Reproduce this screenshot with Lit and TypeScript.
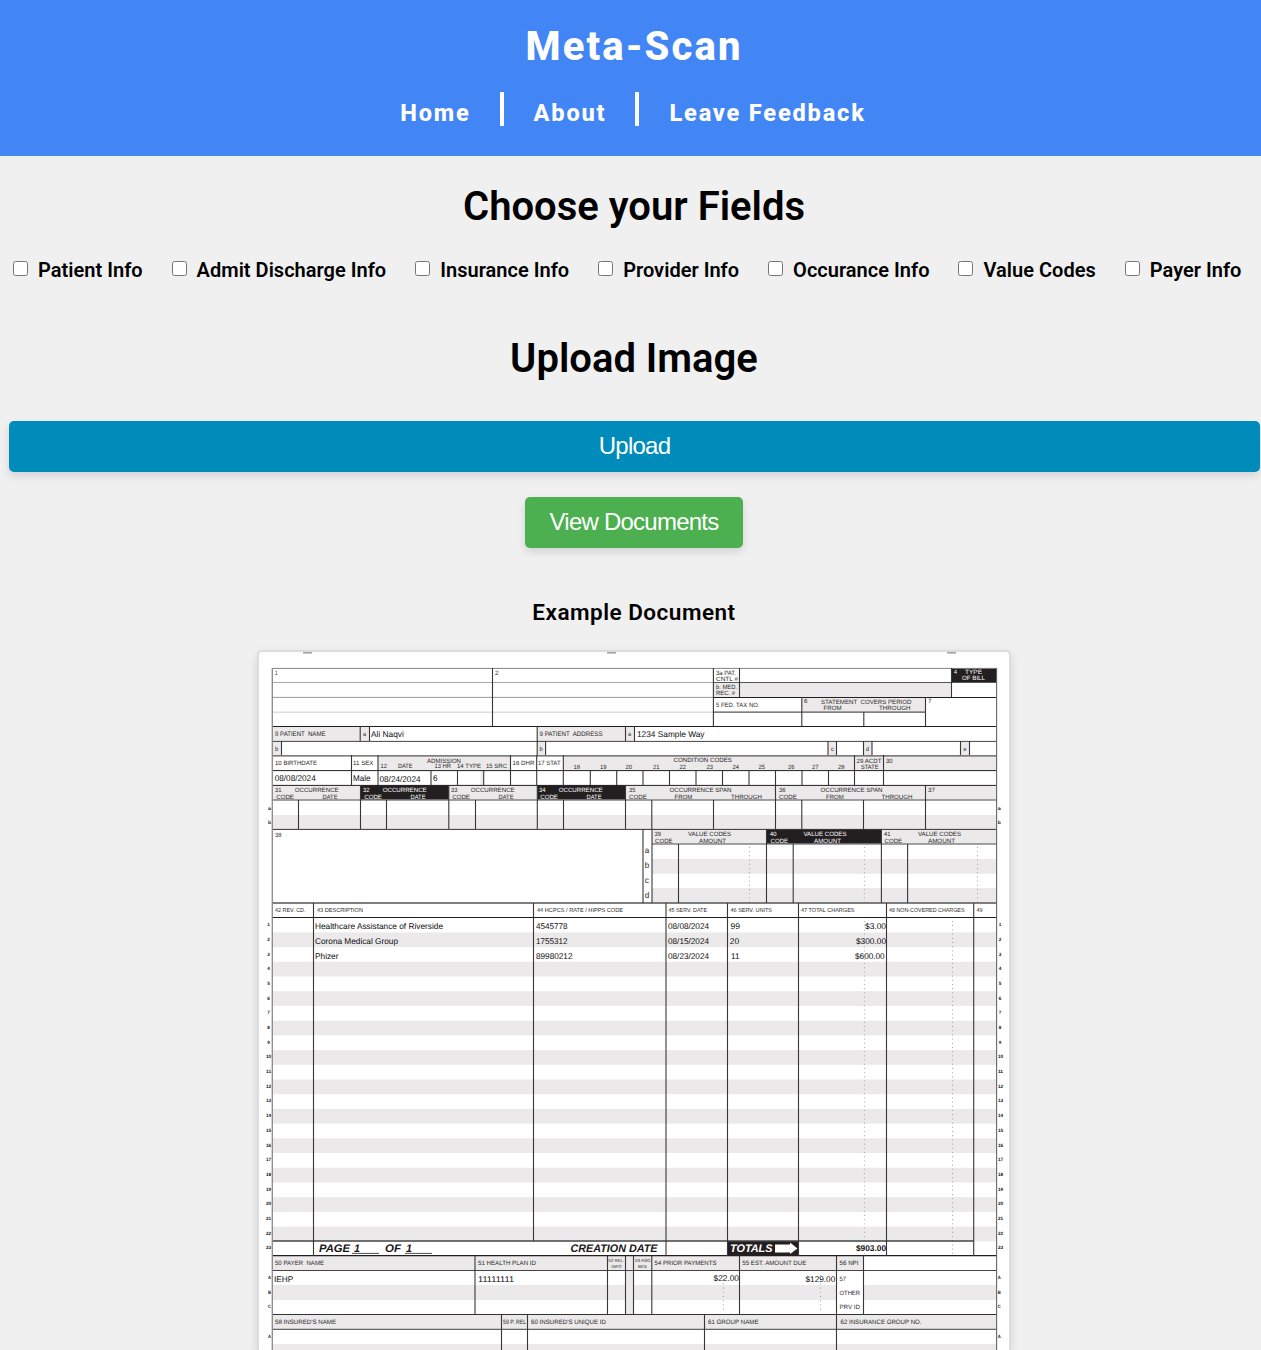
import { LitElement, html, svg, css } from "lit";
import { customElement } from "lit/decorators.js";

const INK = "#231f20";
const SHADE = "#ebe9ea";
const MID = "#858384";

// [x, y, width, height, fill]
type Box = [number, number, number, number, string];
// [x1, y1, x2, y2, stroke, width]
type Rule = [number, number, number, number, string?, number?];
// [text, x, baseline, width, size, variant]
type Label = [string, number, number, number, number?, string?];

const boxes: Box[] = [
  [303, 652, 9, 1.6, "#a5a5a5"], [607, 652, 9, 1.6, "#a5a5a5"], [947, 652, 9, 1.6, "#a5a5a5"],
  [951.5, 668, 45.5, 14.5, INK], [713.5, 682.5, 238, 14.8, SHADE],
  [802, 697.3, 123.5, 14.7, SHADE],
  [272, 726.3, 97.5, 15, SHADE], [537, 726.3, 97.5, 15, SHADE],
  [272, 741.3, 9.5, 14.3, SHADE], [537, 741.3, 8.5, 14.3, SHADE],
  [828, 741.3, 8.5, 14.3, SHADE], [863.5, 741.3, 8.5, 14.3, SHADE], [960.5, 741.3, 9, 14.3, SHADE],
  [378, 755.6, 132.5, 14.9, SHADE], [563.3, 755.6, 433.7, 14.9, SHADE],
  [480.5, 770.5, 3, 14.8, SHADE],
  [272, 785.3, 725, 14.7, SHADE], [360.5, 785.3, 88.3, 14.7, INK], [537.3, 785.3, 88.2, 14.7, INK],
  [272, 815, 725, 14.3, SHADE],
  [652, 829.3, 345, 14.7, SHADE], [766.5, 829.3, 115, 14.7, INK],
  [652, 859, 345, 14.8, SHADE], [652, 888, 345, 15, SHADE],
  ...Array.from({ length: 11 }, (_, i): Box => [272, 932.4 + i * 29.42, i === 10 ? 701.5 : 725, 14.7, SHADE]),
  [973.5, 1226.6, 23.5, 14.7, SHADE],
  [727.5, 1241, 71, 14.7, INK],
  [272, 1255.7, 591.5, 14.8, SHADE], [272, 1285, 564.5, 15, SHADE],
  [625.5, 1255.7, 8, 58.8, SHADE], [863.5, 1285, 133.5, 15, SHADE],
  [272, 1314.5, 725, 14.8, SHADE], [272, 1344, 725, 6, SHADE],
];

const across = (y: number, c = INK, w = 1, x1 = 272, x2 = 997): Rule => [x1, y, x2, y, c, w];
const down = (y1: number, y2: number, ...xs: number[]): Rule[] => xs.map((x) => [x, y1, x, y2]);

const rules: Rule[] = [
  across(668.4, MID), across(682.5, "#aaa", 1, 272, 713), across(697.4, "#999", 1, 272, 713),
  across(712.2, "#ccc", 1, 272, 713), across(682.5, "#555", 1, 713, 997), across(697.5, INK, 1, 713, 997),
  across(712.2, "#555", 1.2, 713, 925.5), across(726.5), across(741.4, "#444"), across(755.8, "#555", 1.3),
  across(770.6), across(785.4), across(800, MID, 1.6), across(829.4, "#333"),
  across(844, MID, 1.4, 652), across(903, "#555", 1.3), across(917.5), across(1241, "#444", 1.3, 272, 973.5),
  across(1255.6, INK, 1.2), across(1270.5, "#444"), across(1314.5, "#333"), across(1329.3, "#666", 1.2),
  [272.3, 668, 272.3, 1350, "#888", 1.3], [996.6, 668, 996.6, 1350, "#666", 1.1],
  ...down(668, 726, 492.5, 713.4), ...down(668, 697, 739.5, 951.5),
  ...down(697, 726, 801.8, 925.5), ...down(712, 726, 863.8),
  ...down(726, 741, 360.2, 369.5, 625.5, 634.5), ...down(726, 755, 537.2),
  ...down(741, 755, 281.5, 545.6, 828, 836.5, 863.5, 872, 960.5, 969.5),
  ...down(755, 785, 351.5, 378, 510.5, 536.7, 563.3, 854.5, 883.5),
  ...down(770.5, 785, 431, 457.5, 483.7, 590.3, 616.7, 643, 669.5, 696, 722.5, 749, 775.5, 802, 828.5),
  ...down(785, 829, 360.5, 448.8, 537.3, 625.5, 775.5, 925.5),
  ...down(800, 829, 298.5, 386.5, 475.5, 563.5, 651.8, 713.5, 801.8, 863.5),
  ...down(829, 903, 643, 652, 766.5, 881.4), ...down(844, 903, 678.5, 793.2, 907.6),
  ...down(903, 1256, 313.5, 666, 727.5, 798.5, 886.5, 973.7), ...down(903, 1241, 533.5),
  ...down(1256, 1314, 475, 607.5, 625.5, 633.5, 651.8, 739.5, 836.5, 863.5),
  ...down(1314, 1350, 501.5, 527.5, 704.5, 836.5),
  across(1253.4, INK, 0.8, 352, 379), across(1253.4, INK, 0.8, 405, 432),
];

// [x, y1, y2]
const dotted: [number, number, number][] = [
  [749.5, 847, 902], [864.4, 847, 902], [977.5, 847, 902],
  [864.4, 921, 1254], [952.5, 921, 1254], [723.4, 1275, 1312], [820.5, 1275, 1312],
];

const labels: Label[] = [
  ["1", 275, 675.3, 2.5], ["2", 495, 675.3, 3.5],
  ["3a PAT.", 716, 674.8, 20], ["CNTL #", 716, 681, 22], ["b. MED.", 716, 689.2, 21], ["REC. #", 716, 695.2, 19],
  ["4", 954, 674, 3, 6.2, "inv"], ["TYPE", 965, 674, 17, 6.2, "inv"], ["OF BILL", 962, 680, 23, 6.2, "inv"],
  ["5 FED. TAX NO.", 716, 706.7, 43.5], ["6", 804, 703.3, 3.5], ["STATEMENT  COVERS PERIOD", 821, 703.6, 90.5],
  ["FROM", 823.5, 710.2, 18], ["THROUGH", 879, 710.2, 31.5], ["7", 928, 703.3, 3.5],
  ["8 PATIENT  NAME", 275, 736, 50.5, 6.5], ["a", 363, 736, 3], ["9 PATIENT  ADDRESS", 539.5, 736, 63, 6.5], ["a", 628, 736, 3],
  ["b", 275, 751, 3.2], ["b", 539.5, 751, 3.2], ["c", 831, 751, 3], ["d", 866, 751, 3], ["e", 963.5, 751, 3],
  ["10 BIRTHDATE", 275, 765.3, 42], ["11 SEX", 353, 765.3, 20.5], ["12", 380.5, 768.4, 6.5], ["DATE", 398, 768.4, 14.5],
  ["ADMISSION", 427, 762.5, 34], ["13 HR", 434.5, 768.4, 16.5], ["14 TYPE", 457, 768.4, 24], ["15 SRC", 486, 768.4, 21],
  ["16 DHR", 512.5, 765.3, 22], ["17 STAT", 538, 765.3, 22.5], ["CONDITION CODES", 673.5, 762.4, 58.5],
  ...["18", "19", "20", "21", "22", "23", "24", "25", "26", "27", "28"].map(
    (n, i): Label => [n, [573.5, 600, 625.5, 653, 679.5, 706.5, 732.5, 758.5, 788, 812, 838][i], 768.6, 6.5]),
  ["29 ACDT", 856.5, 762.7, 25], ["STATE", 861, 768.8, 17.5], ["30", 886, 762.5, 6.5],
  ...[[275, ""], [363, "inv"], [451, ""], [539, "inv"]].flatMap(([x, v], i): Label[] => [
    [String(31 + i), +x, 791.7, 6.5, 6.2, String(v)], ["OCCURRENCE", +x + 19.7, 791.7, 44, 6.2, String(v)],
    ["CODE", +x + 1.2, 798.6, 17.8, 6.2, String(v)], ["DATE", +x + 47.5, 798.6, 15, 6.2, String(v)]]),
  ...[[629, 669.5, 674.5, 731], [779, 820.5, 826, 881.5]].flatMap(([x, a, b, c], i): Label[] => [
    [String(35 + i), x, 791.7, 6.5], ["OCCURRENCE SPAN", a, 791.7, 62], ["CODE", x, 798.6, 17.8],
    ["FROM", b, 798.6, 17.8], ["THROUGH", c, 798.6, 31]]),
  ["37", 928, 791.7, 7], ["38", 275, 836.5, 6.5],
  ...[[654.5, 688, 699, ""], [770, 803.5, 814, "inv"], [884, 918, 928, ""]].flatMap(([x, a, b, v], i): Label[] => [
    [String(39 + i), +x, 836.4, 6.5, 6.2, String(v)], ["VALUE CODES", +a, 836.4, 43, 6.2, String(v)],
    ["CODE", +x + 0.6, 842.9, 17.5, 6.2, String(v)], ["AMOUNT", +b, 842.9, 27, 6.2, String(v)]]),
  ["a", 644.8, 853, 4.5, 8.4], ["b", 644.8, 868, 4.5, 8.4], ["c", 644.8, 883, 4.2, 8.4], ["d", 644.8, 898.4, 4.5, 8.4],
  ["42 REV. CD.", 275, 912.3, 30.5, 5.8], ["43 DESCRIPTION", 317, 912.3, 46, 5.8], ["44 HCPCS / RATE / HIPPS CODE", 537, 912.3, 86, 5.8],
  ["45 SERV. DATE", 668.5, 912.3, 38.5, 5.8], ["46 SERV. UNITS", 730.5, 912.3, 41.5, 5.8], ["47 TOTAL CHARGES", 801, 912.3, 53.5, 5.8],
  ["48 NON-COVERED CHARGES", 889, 912.3, 75.5, 5.8], ["49", 976.5, 912.3, 6, 5.8],
  ["50 PAYER  NAME", 275, 1265.2, 49, 6.3], ["51 HEALTH PLAN ID", 478, 1265.2, 58, 6.3],
  ["52 REL.", 608.3, 1261.5, 16, 4.5], ["INFO", 611.5, 1268, 10, 4.5], ["53 ASG", 635, 1261.5, 15.5, 4.5], ["BEN.", 638, 1268, 9.5, 4.5],
  ["54 PRIOR PAYMENTS", 654.5, 1265.2, 62, 6.3], ["55 EST. AMOUNT DUE", 742.3, 1265.2, 64, 6.3], ["56 NPI", 839.5, 1265.2, 19, 6.3],
  ["57", 839.5, 1280.6, 6.5], ["OTHER", 839.5, 1294.6, 20.5, 6.2], ["PRV ID", 839.5, 1308.6, 20.5, 6.2],
  ["58 INSURED'S NAME", 275, 1324, 61, 6.3], ["59 P. REL", 503, 1324, 23.3, 6.3], ["60 INSURED'S UNIQUE ID", 531, 1324, 75, 6.3],
  ["61 GROUP NAME", 708, 1324, 50.5, 6.3], ["62 INSURANCE GROUP NO.", 840.5, 1324, 81, 6.3],
  // Filled-in values
  ["Ali Naqvi", 371, 737, 32.8, 8.3, "val"], ["1234 Sample Way", 637, 737, 67.5, 8.3, "val"],
  ["08/08/2024", 274.7, 781.3, 41, 8.3, "val"], ["Male", 353, 780.8, 17.5, 8.3, "val"], ["08/24/2024", 379.5, 782.3, 41, 8.3, "val"], ["6", 433, 781.3, 4.5, 8.3, "val"],
  ["Healthcare Assistance of Riverside", 315, 928.6, 128, 8.3, "val"], ["Corona Medical Group", 315, 944, 83, 8.3, "val"], ["Phizer", 315, 958.6, 23.5, 8.3, "val"],
  ["4545778", 536, 929.2, 31.5, 8.3, "val"], ["1755312", 536, 944, 31.5, 8.3, "val"], ["89980212", 536, 958.6, 36.5, 8.3, "val"],
  ["08/08/2024", 668, 929.4, 41, 8.3, "val"], ["08/15/2024", 668, 944, 41, 8.3, "val"], ["08/23/2024", 668, 958.8, 41, 8.3, "val"],
  ["99", 730.5, 929.3, 9.5, 8.3, "val"], ["20", 729.8, 944, 9.3, 8.3, "val"], ["11", 731, 959.4, 8.5, 8.3, "val"],
  ["$3.00", 865, 929.4, 21, 8.3, "val"], ["$300.00", 856, 944, 30, 8.3, "val"], ["$600.00", 855, 958.8, 29.7, 8.3, "val"],
  ["IEHP", 274, 1281.8, 19.3, 8.3, "val"], ["11111111", 478, 1281.9, 36, 8.3, "val"],
  ["$22.00", 713.5, 1281.4, 25.5, 8.3, "val"], ["$129.00", 805.5, 1281.9, 29.8, 8.3, "val"],
  ["$903.00", 856, 1251.4, 30, 8.3, "strong"],
  ["PAGE", 319, 1252, 31, 11, "title"], ["1", 354, 1252.4, 6, 11, "title"], ["OF", 385, 1252, 16, 11, "title"], ["1", 406, 1252.4, 6, 11, "title"],
  ["CREATION DATE", 570.5, 1252, 87, 11, "title"], ["TOTALS", 730, 1252, 42.5, 11, "title inv"],
  // Line numbers in both margins
  ...Array.from({ length: 23 }, (_, i) => i).flatMap((i): Label[] => {
    const y = 926.2 + i * 14.69;
    const w = i < 9 ? 2.6 : 5.2;
    return [[String(i + 1), i < 9 ? 267.2 : 266, y, w, 4.8, "strong"], [String(i + 1), i < 9 ? 998.7 : 997.9, y, w, 4.8, "strong"]];
  }),
  ...([["a", 809.6], ["b", 824], ["A", 1279], ["B", 1293.6], ["C", 1308.2], ["A", 1337.8]] as [string, number][]).flatMap(
    ([t, y]): Label[] => [[t, 268, y, 3, 4.8, "strong"], [t, 997.8, y, 3, 4.8, "strong"]]),
];

@customElement("sample-form")
export class SampleForm extends LitElement {
  static styles = css`
    :host { display: block; }
    .sheet { display: block; width: 750px; height: 698px; }
    text { font-family: "Liberation Sans", Arial, sans-serif; fill: #2a2728; white-space: pre; text-rendering: geometricPrecision; }
    .val { fill: #0c0c0c; }
    .strong { font-weight: 700; fill: #111; }
    .title { font-weight: 700; font-style: italic; fill: #1a1718; }
    .inv { fill: #fff; }
  `;

  render() {
    return html`<svg class="sheet" viewBox="259 652 750 698" role="img" aria-label="Example document">
      ${boxes.map(([x, y, w, h, f]) => svg`<rect x=${x} y=${y} width=${w} height=${h} fill=${f}></rect>`)}
      ${dotted.map(([x, a, b]) => svg`<line x1=${x} y1=${a} x2=${x} y2=${b} stroke="#999" stroke-width="0.9" stroke-dasharray="1 3.2"></line>`)}
      ${rules.map(([a, b, c, d, s, w]) => svg`<line x1=${a} y1=${b} x2=${c} y2=${d} stroke=${s ?? "#3a3637"} stroke-width=${w ?? 1.1}></line>`)}
      <path d="M775 1244.4H790V1242.6L797.5 1248.4L790 1254V1252.6H775Z" fill="#fff"></path>
      ${labels.map(([t, x, y, w, s, v]) => svg`<text class=${v ?? ""} x=${x} y=${y} font-size=${s ?? 6.2} textLength=${w} lengthAdjust="spacingAndGlyphs">${t}</text>`)}
    </svg>`;
  }
}

@customElement("app-root")
export class AppRoot extends LitElement {
  static styles = css`
    :host { display: block; height: 1350px; overflow: hidden; background: #f0f0f0; color: #000; font-family: Roboto, sans-serif; }
    .header { height: 156px; box-sizing: border-box; padding: 23px 0 0 7px; background: #4285f5; color: #fff; text-align: center; }
    .brand { margin: 0; font-size: 40px; line-height: 48px; font-weight: 800; letter-spacing: 2.1px; }
    .nav { display: flex; justify-content: center; align-items: flex-start; margin: 21px 2px 0 0; height: 42px; font-size: 23.6px; line-height: 42px; font-weight: 800; letter-spacing: 1.8px; }
    .bar { width: 4px; height: 34px; margin: 0 30px 0 29px; background: #fff; }
    .main { padding-left: 8px; width: 1252px; display: flex; flex-direction: column; align-items: center; }
    .title { margin: 0; font-size: 40px; line-height: 48px; font-weight: 600; }
    .choose { margin-top: 27px; }
    .upload-title { margin-top: 53px; }
    .fields { display: flex; align-self: flex-start; gap: 29px; margin: 27px 0 0 5px; height: 24px; }
    .field { display: flex; gap: 10px; font-size: 20px; line-height: 24px; font-weight: 600; letter-spacing: 0.02px; white-space: nowrap; }
    .check { width: 15px; height: 15px; margin: 3px 0 0; }
    .button { height: 51px; border: 0; border-radius: 5px; padding: 0 0 2px; color: #fff; font: 24px/49px "Liberation Sans", Arial, sans-serif; letter-spacing: -0.77px; box-shadow: 0 4px 8px rgba(0, 0, 0, 0.12); }
    .upload { align-self: flex-end; width: 1251px; margin-top: 38px; background: #008cba; }
    .view { width: 218px; margin-top: 25px; background: #4caf50; }
    .caption { margin: 50px 0 0; font-size: 22.5px; line-height: 28px; font-weight: 600; letter-spacing: 0.5px; }
    .document { width: 750px; margin-top: 24px; border: 2px solid #ddd; border-bottom: 0; border-radius: 5px 5px 0 0; overflow: hidden; background: #fff; box-shadow: 0 4px 10px rgba(0, 0, 0, 0.12); }
  `;

  private fields = ["Patient Info", "Admit Discharge Info", "Insurance Info", "Provider Info", "Occurance Info", "Value Codes", "Payer Info"];

  render() {
    return html`
      <header class="header">
        <h1 class="brand">Meta-Scan</h1>
        <nav class="nav">
          <span>Home</span><i class="bar"></i><span>About</span><i class="bar"></i><span>Leave Feedback</span>
        </nav>
      </header>
      <main class="main">
        <h2 class="title choose">Choose your Fields</h2>
        <div class="fields">
          ${this.fields.map((f) => html`<label class="field"><input class="check" type="checkbox" />${f}</label>`)}
        </div>
        <h2 class="title upload-title">Upload Image</h2>
        <button class="button upload">Upload</button>
        <button class="button view">View Documents</button>
        <h3 class="caption">Example Document</h3>
        <div class="document"><sample-form></sample-form></div>
      </main>
    `;
  }
}
